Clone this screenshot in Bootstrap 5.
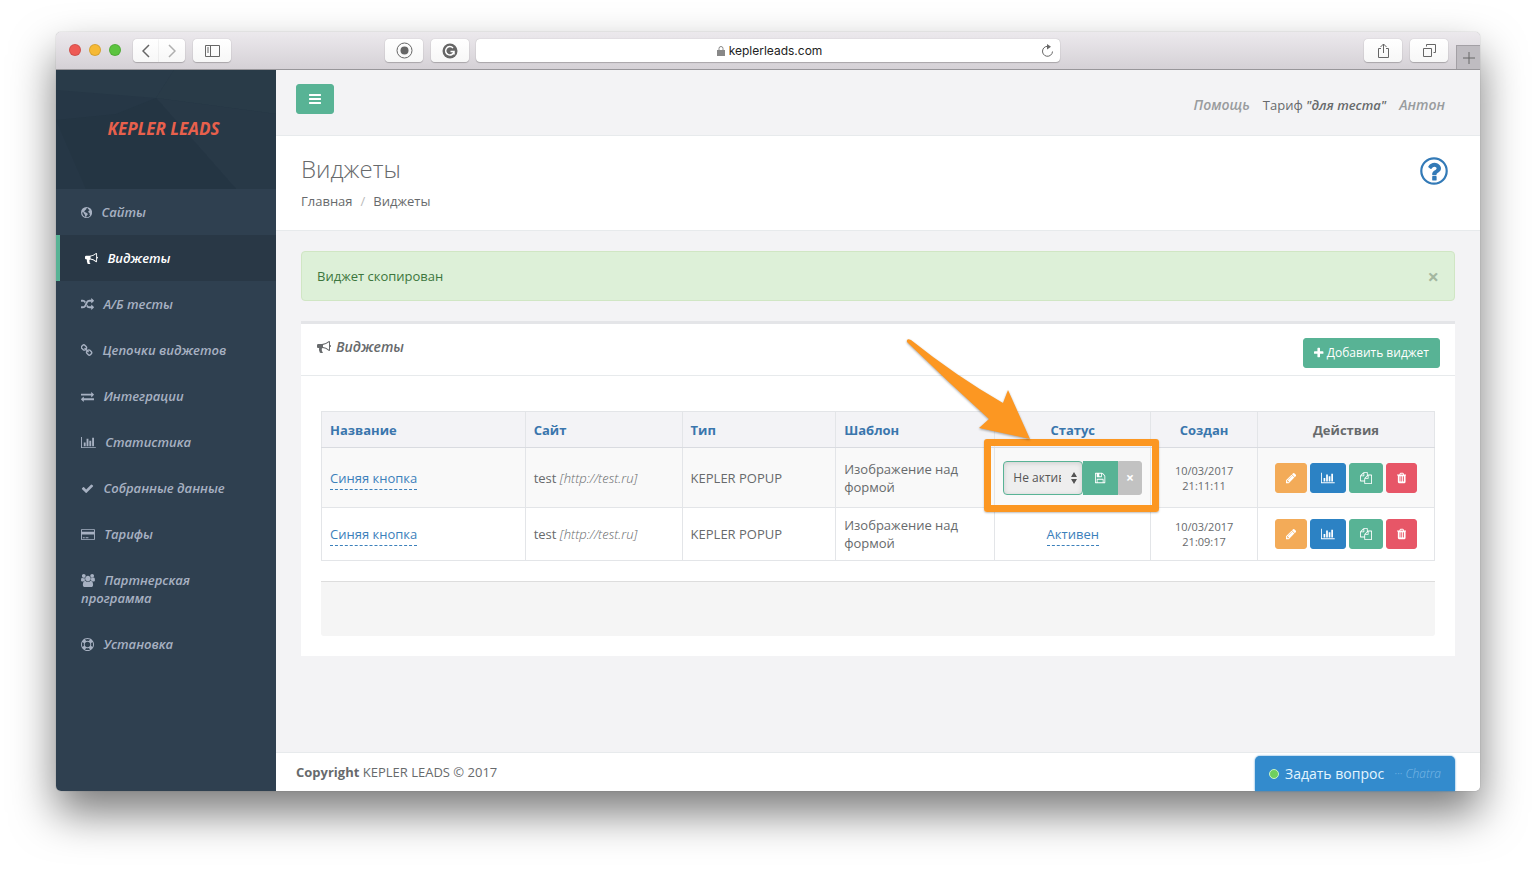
<!DOCTYPE html>
<html lang="ru">
<head>
<meta charset="utf-8">
<meta name="viewport" content="width=device-width, initial-scale=1">
<title>Виджеты</title>
<link rel="stylesheet" href="https://cdn.jsdelivr.net/npm/bootstrap@5.3.0/dist/css/bootstrap.min.css">
<style>
  :root { --green:#58b395; --blue:#2c82c4; --ink:#676a6c; --line:#e3e5e8; --link:#3a76ad; }
  body { font-family:"Open Sans","Noto Sans",sans-serif; font-size:13px; line-height:18px; color:var(--ink); background:#fff; padding:32px 56px 80px; }
  a { text-decoration:none; }
  .fa-ico { height:1em; width:auto; fill:currentColor; vertical-align:-2px; }
  .browser { min-height:calc(100vh - 112px); border-radius:5px; box-shadow:0 22px 44px rgba(0,0,0,.52), 0 0 1px rgba(0,0,0,.45); background:#f3f3f5; }

  /* window toolbar */
  .chrome { display:grid; grid-template-columns:1fr 41% 1fr; column-gap:7px; height:38px; background:linear-gradient(#ece9ed,#d5d1d6); border-bottom:1px solid #98969a; border-radius:5px 5px 0 0; }
  .lights { gap:8px; padding:0 12px 2px 13px; }
  .dot { width:12px; height:12px; border-radius:50%; border:1px solid rgba(0,0,0,.12); }
  .dot-close { background:#ee5a55; }
  .dot-min { background:#f6b935; }
  .dot-max { background:#5cc43f; }
  .tool { height:23px; width:38px; padding:0; border:0; border-radius:4px; background:linear-gradient(#fff,#f7f7f7); box-shadow:0 0 1px rgba(0,0,0,.3),0 1px 1px rgba(0,0,0,.2); display:flex; align-items:center; justify-content:center; color:#666; }
  .tool svg, .newtab svg, .address svg { fill:none; stroke:currentColor; }
  .tool-half { width:26px; }
  .address { height:23px; border-radius:4px; background:#fff; box-shadow:0 0 1px rgba(0,0,0,.3),0 1px 1px rgba(0,0,0,.2); font:12px/23px Inter,"Liberation Sans",sans-serif; color:#222; padding:0 6px 0 22px; }
  .newtab { width:24px; height:24px; padding:0; border:1px solid #a3a0a5; border-width:1px 0 0 1px; background:#bfbcc1; color:#666; display:flex; align-items:center; justify-content:center; }

  /* sidebar */
  .side { width:220px; flex:none; background:#2f4050; border-bottom-left-radius:5px; }
  .brand-box { height:119px; display:flex; align-items:center; justify-content:center; padding:0 5px 2px 0; color:#e8604c; font-size:17px; font-weight:700; font-style:italic;
    background:#263746 url("data:image/svg+xml,%3Csvg xmlns='http://www.w3.org/2000/svg' viewBox='0 0 220 119' preserveAspectRatio='none'%3E%3Cpath d='M0 0h118L100 28 0 20z' fill='%23293b49'/%3E%3Cpath d='M118 0h102v44l-120-16z' fill='%23293b48'/%3E%3Cpath d='M100 28l120 16v75h-40z' fill='%23283947'/%3E%3Cpath d='M0 50l60-6 40-16 80 91H30z' fill='%23243543'/%3E%3C/svg%3E") center/100% 100%; }
  .side a { display:block; padding:14px 20px 14px 25px; color:#a7b1c2; font-weight:600; font-style:italic; }
  .side a .fa-ico { margin-right:6px; }
  .side a.on { background:#293846; color:#fff; border-left:4px solid var(--green); }

  .btn-k { --bs-btn-color:#fff; --bs-btn-hover-color:#fff; --bs-btn-padding-y:5px; --bs-btn-padding-x:10px; --bs-btn-font-size:12px; --bs-btn-border-radius:3px; line-height:18px; color:#fff; }
  .c-green { background:var(--green); border-color:var(--green); }
  .c-blue { background:var(--blue); border-color:var(--blue); }
  .c-amber { background:#f3ab58; border-color:#f3ab58; }
  .c-red { background:#e75667; border-color:#e75667; }
  .menu-btn { width:38px; padding:5px 0; font-size:14px; }
  .topline { min-height:66px; border-bottom:1px solid #e7eaec; padding:14px 35px 0 20px; }
  .toplinks { gap:13px; font-weight:600; font-style:italic; padding-top:12px; }
  .toplinks a { color:#999c9e; font-size:14px; }
  .heading { background:#fff; border-bottom:1px solid #e7eaec; padding:19px 32px 19px 25px; min-height:95px; }
  .heading h1 { font-size:24px; line-height:28px; font-weight:300; margin:0 0 9px; }
  .crumbs { --bs-breadcrumb-divider:"/"; --bs-breadcrumb-item-padding-x:8px; --bs-breadcrumb-divider-color:#bbb; margin:0; }
  .crumbs a, .crumbs .active { color:var(--ink); }
  .help-link { color:#337ab7; padding-top:2px; height:30px; }
  .wrapper { padding:20px 25px 0; }
  .note { background:#ddf0d8; border:1px solid #d0e6c4; color:#3c763d; border-radius:4px; padding:15px; margin-bottom:20px; }
  .note .btn-x { border:0; background:none; padding:2px 0 0; color:#a3b7a0; font-weight:700; font-size:20px; line-height:16px; }
  .box { background:#fff; border-top:3px solid #e4e5e8; margin-bottom:76px; }
  .box-head { border-bottom:1px solid #e7eaec; padding:14px 15px 7px 16px; min-height:52px; }
  .box-head h2 { font-size:14px; line-height:18px; font-weight:600; font-style:italic; margin:0; }
  .box-head h2 .fa-ico { margin-right:5px; }
  .box-body { padding:35px 20px 20px; }

  .grid { --bs-table-bg:transparent; --bs-table-color:var(--ink); table-layout:fixed; color:var(--ink); border:1px solid var(--line); margin-bottom:20px; }
  .grid th, .grid td { padding:8px; border:1px solid var(--line); vertical-align:middle; }
  .grid thead th { background:#f3f3f6; border-bottom-color:#d9dbe0; font-weight:700; padding:9px 8px 8px; }
  .grid th a { color:var(--link); }
  .grid tbody tr:first-child td { background:#f9f9f9; height:60px; }
  .grid tbody tr:last-child td { height:53px; }
  .edit { color:#3b80bb; border-bottom:1px dashed #3b80bb; padding:0 0 2px; }
  .when { font-size:11px; line-height:15px; }
  .site { font-weight:300; }
  .acts { gap:3px; }
  .pick { width:80px; height:34px; padding:0 21px 0 9px; font-size:12px; color:#555; border:1px solid var(--green); border-radius:4px; appearance:none;
    background:#eee url("data:image/svg+xml,%3Csvg xmlns='http://www.w3.org/2000/svg' viewBox='0 0 6 12'%3E%3Cpath d='M0 5l3-5 3 5zM0 7h6l-3 5z' fill='%23555'/%3E%3C/svg%3E") no-repeat right 5px center/6px 12px; box-shadow:inset 0 1px 5px rgba(0,0,0,.14); }
  .btn-save { width:35px; border-radius:0; padding:0; font-size:12px; }
  .btn-drop { width:25px; border-radius:0 3px 3px 0; padding:0; background:#c2c2c2; border-color:#c2c2c2; font-size:14px; font-weight:700; }
  /* callout drawn over the status cell */
  .mark-frame { position:absolute; inset:-9px -9px -5px -11px; border:7px solid #fc9722; border-radius:3px; box-shadow:0 1px 2px rgba(0,0,0,.25); pointer-events:none; }
  .mark-arrow { position:absolute; left:-91px; top:-112px; width:130px; height:108px; filter:drop-shadow(0 1px 1px rgba(0,0,0,.35)); pointer-events:none; z-index:1; }
  .well-bar { height:55px; background:#f5f5f5; border-top:1px solid #ddd; border-radius:0 0 3px 3px; }
  .foot { background:#fff; border-top:1px solid #e7eaec; padding:10px 20px; border-bottom-right-radius:5px; }
  .chat { position:absolute; right:25px; bottom:0; width:200px; height:35px; border:0; border-radius:5px 5px 0 0; background:#338bcd; color:#e4f5ff; font-size:14px; box-shadow:0 0 2px #338bcd; padding:0 14px; }
  .chat i { font-size:12px; font-weight:300; color:#79b8e6; }
  .online { width:10px; height:10px; border-radius:50%; background:#6fcf5e; border:1px solid #c8f3c6; margin-right:6px; }
</style>
</head>
<body>
<svg width="0" height="0" class="position-absolute" aria-hidden="true"><defs>
  <path id="bars" d="M1664 1344v128q0 26-19 45t-45 19h-1408q-26 0-45-19t-19-45v-128q0-26 19-45t45-19h1408q26 0 45 19t19 45zm0-512v128q0 26-19 45t-45 19h-1408q-26 0-45-19t-19-45v-128q0-26 19-45t45-19h1408q26 0 45 19t19 45zm0-512v128q0 26-19 45t-45 19h-1408q-26 0-45-19t-19-45v-128q0-26 19-45t45-19h1408q26 0 45 19t19 45z"/>
  <path id="plus" d="M1600 736v192q0 40-28 68t-68 28h-416v416q0 40-28 68t-68 28h-192q-40 0-68-28t-28-68v-416h-416q-40 0-68-28t-28-68v-192q0-40 28-68t68-28h416v-416q0-40 28-68t68-28h192q40 0 68 28t28 68v416h416q40 0 68 28t28 68z"/>
  <path id="globe" fill-rule="evenodd" d="M896 128a768 768 0 1 1 0 1536a768 768 0 1 1 0-1536zM1000 240L860 330 880 430 740 560 640 640 560 760 700 860 820 900 960 1000 1060 1080 1040 1220 900 1350 840 1500 760 1540 700 1400 660 1200 540 1060 470 900 400 800 330 900 300 1000 420 1300 700 1520 960 1560 1200 1480 1400 1300 1300 1180 1340 1020 1240 920 1120 840 1160 680 1300 620 1240 500 1120 420z"/>
  <path id="bullhorn" d="M1664 640q53 0 90.5 37.5t37.5 90.5-37.5 90.5-90.5 37.5v384q0 52-38 90t-90 38q-417-347-812-380-58 19-91 66t-31 100.5 40 92.5q-20 33-23 65.5t6 58 33.5 55 48 50 61.5 50.5q-29 58-111.5 83t-168.5 11.5-132-55.5q-7-23-29.5-87.5t-32-94.5-23-89-15-101 3.5-98.5 22-110.5h-122q-66 0-113-47t-47-113v-192q0-66 47-113t113-47h480q435 0 896-384 52 0 90 38t38 90v384zm-128 604v-954q-394 302-768 343v270q377 42 768 341z"/>
  <path id="random" d="M666 481q-60 92-137 273-22-45-37-72.5t-40.5-63.5-51-56.5-63-35-81.5-14.5h-224q-14 0-23-9t-9-23v-192q0-14 9-23t23-9h224q250 0 410 225zm1126 799q0 14-9 23l-320 320q-9 9-23 9-13 0-22.5-9.5t-9.5-22.5v-192q-32 0-85 .5t-81 1-73-1-71-5-64-10.5-63-18.5-58-28.5-59-40-55-53.5-56-69.5q59-93 136-273 22 45 37 72.5t40.5 63.5 51 56.5 63 35 81.5 14.5h256v-192q0-14 9-23t23-9q12 0 24 10l319 319q9 9 9 23zm0-896q0 14-9 23l-320 320q-9 9-23 9-13 0-22.5-9.5t-9.5-22.5v-192h-256q-48 0-87 15t-69 45-51 61.5-45 77.5q-32 62-78 171-29 66-49.5 111t-54 105-64 100-74 83-90 68.5-106.5 42-128 16.5h-224q-14 0-23-9t-9-23v-192q0-14 9-23t23-9h224q48 0 87-15t69-45 51-61.5 45-77.5q32-62 78-171 29-66 49.5-111t54-105 64-100 74-83 90-68.5 106.5-42 128-16.5h256v-192q0-14 9-23t23-9q12 0 24 10l319 319q9 9 9 23z"/>
  <path id="chain" d="M1456 1216q0-40-28-68l-208-208q-28-28-68-28-42 0-72 32 3 3 19 18.5t21.5 21.5 15 19 13 25.5 3.5 27.5q0 40-28 68t-68 28q-15 0-27.5-3.5t-25.5-13-19-15-21.5-21.5-18.5-19q-33 31-33 73 0 40 28 68l206 207q27 27 68 27 40 0 68-26l147-146q28-28 28-67zm-703-705q0-40-28-68l-206-207q-28-28-68-28-39 0-68 27l-147 146q-28 28-28 67 0 40 28 68l208 208q27 27 68 27 42 0 72-31-3-3-19-18.5t-21.5-21.5-15-19-13-25.5-3.5-27.5q0-40 28-68t68-28q15 0 27.5 3.5t25.5 13 19 15 21.5 21.5 18.5 19q33-31 33-73zm895 705q0 120-85 203l-147 146q-83 83-203 83-121 0-204-85l-206-207q-83-83-83-203 0-123 88-209l-88-88q-86 88-208 88-120 0-204-84l-208-208q-84-84-84-204t85-203l147-146q83-83 203-83 121 0 204 85l206 207q83 83 83 203 0 123-88 209l88 88q86-88 208-88 120 0 204 84l208 208q84 84 84 204z"/>
  <path id="exchange" d="M1792 1184v192q0 13-9.500 22.500t-22.500 9.500h-1376v192q0 13-9.500 22.500t-22.500 9.500q-12 0-24-10l-319-320q-9-9-9-22 0-14 9-23l320-320q9-9 23-9 13 0 22.500 9.500t9.500 22.500v192h1376q13 0 22.500 9.500t9.500 22.500zm0-544q0 14-9 23l-320 320q-9 9-23 9-13 0-22.500-9.500t-9.500-22.500v-192h-1376q-13 0-22.500-9.500t-9.500-22.500v-192q0-13 9.500-22.500t22.500-9.500h1376v-192q0-14 9-23t23-9q12 0 24 10l319 319q9 9 9 23z"/>
  <path id="chart" d="M640 896v512h-256v-512h256zm384-512v1024h-256v-1024h256zm1024 1152v128h-2048v-1536h128v1408h1920zm-640-896v768h-256v-768h256zm384-384v1152h-256v-1152h256z"/>
  <path id="check" d="M1671 566q0 40-28 68l-724 724-136 136q-28 28-68 28t-68-28l-136-136-362-362q-28-28-28-68t28-68l136-136q28-28 68-28t68 28l294 295 656-657q28-28 68-28t68 28l136 136q28 28 28 68z"/>
  <path id="card-ico" d="M1760 128q66 0 113 47t47 113v1216q0 66-47 113t-113 47h-1600q-66 0-113-47t-47-113v-1216q0-66 47-113t113-47h1600zm-1600 128q-13 0-22.500 9.500t-9.500 22.500v224h1664v-224q0-13-9.500-22.500t-22.500-9.500h-1600zm1600 1280q13 0 22.500-9.500t9.500-22.500v-608h-1664v608q0 13 9.500 22.500t22.500 9.500h1600zm-1504-128v-128h256v128h-256zm384 0v-128h384v128h-384z"/>
  <path id="users" d="M593 896q-162 5-265 128h-134q-82 0-138-40.500t-56-118.500q0-353 124-353 6 0 43.500 21t97.500 42.500 119 21.500q67 0 133-23-5 37-5 66 0 159 81 294zm1071 637q0 120-73 189.500t-194 69.500h-874q-121 0-194-69.500t-73-189.500q0-53 3.500-103.500t14-109 26.500-108.500 43-97.500 62-81 85.500-53.500 111.500-20q10 0 43 21.500t73 48 107 48 135 21.500 135-21.500 107-48 73-48 43-21.500q61 0 111.500 20t85.500 53.500 62 81 43 97.500 26.500 108.500 14 109 3.500 103.500zm-1024-1277q0 106-75 181t-181 75-181-75-75-181 75-181 181-75 181 75 75 181zm704 384q0 159-112.500 271.500t-271.500 112.500-271.500-112.500-112.500-271.500 112.500-271.500 271.500-112.500 271.500 112.500 112.500 271.500zm576 225q0 78-56 118.500t-138 40.500h-134q-103-123-265-128 81-135 81-294 0-29-5-66 66 23 133 23 59 0 119-21.500t97.500-42.500 43.500-21q124 0 124 353zm-128-609q0 106-75 181t-181 75-181-75-75-181 75-181 181-75 181 75 75 181z"/>
  <path id="ring" d="M896 0q182 0 348 71t286 191 191 286 71 348-71 348-191 286-286 191-348 71-348-71-286-191-191-286-71-348 71-348 191-286 286-191 348-71zm0 128q-190 0-361 90l194 194q82-28 167-28t167 28l194-194q-171-90-361-90zm-678 1129l194-194q-28-82-28-167t28-167l-194-194q-90 171-90 361t90 361zm678 407q190 0 361-90l-194-194q-82 28-167 28t-167-28l-194 194q171 90 361 90zm0-384q159 0 271.500-112.500t112.500-271.500-112.500-271.500-271.500-112.500-271.500 112.500-112.500 271.500 112.500 271.500 271.500 112.500zm484-217l194 194q90-171 90-361t-90-361l-194 194q28 82 28 167t-28 167z"/>
  <path id="pencil" d="M491 1536l91-91-235-235-91 91v107h128v128h107zm523-928q0-22-22-22-10 0-17 7l-542 542q-7 7-7 17 0 22 22 22 10 0 17-7l542-542q7-7 7-17zm-54-192l416 416-832 832h-416v-416zm683 96q0 53-37 90l-166 166-416-416 166-165q36-38 90-38 53 0 91 38l235 234q37 39 37 91z"/>
  <path id="files" d="M1696 384q40 0 68 28t28 68v1216q0 40-28 68t-68 28h-960q-40 0-68-28t-28-68v-288h-544q-40 0-68-28t-28-68v-672q0-40 20-88t48-76l408-408q28-28 76-48t88-20h416q40 0 68 28t28 68v328q68-40 128-40h416zm-544 213l-299 299h299v-299zm-640-384l-299 299h299v-299zm196 647l316-316v-416h-384v416q0 40-28 68t-68 28h-416v640h512v-256q0-40 20-88t48-76zm956 804v-1152h-384v416q0 40-28 68t-68 28h-416v640h896z"/>
  <path id="trash" d="M704 1376v-704q0-14-9-23t-23-9h-64q-14 0-23 9t-9 23v704q0 14 9 23t23 9h64q14 0 23-9t9-23zm256 0v-704q0-14-9-23t-23-9h-64q-14 0-23 9t-9 23v704q0 14 9 23t23 9h64q14 0 23-9t9-23zm256 0v-704q0-14-9-23t-23-9h-64q-14 0-23 9t-9 23v704q0 14 9 23t23 9h64q14 0 23-9t9-23zm-544-992h448l-48-117q-7-9-17-11h-317q-10 2-17 11zm928 32v64q0 14-9 23t-23 9h-96v948q0 83-47 143.500t-113 60.500h-832q-66 0-113-58.500t-47-141.500v-952h-96q-14 0-23-9t-9-23v-64q0-14 9-23t23-9h309l70-167q15-37 54-63t79-26h320q40 0 79 26t54 63l70 167h309q14 0 23 9t9 23z"/>
  <path id="floppy" d="M512 1536h768v-384h-768v384zm896 0h128v-896q0-14-10-38.500t-20-34.500l-281-281q-10-10-34-20t-39-10v416q0 40-28 68t-68 28h-576q-40 0-68-28t-28-68v-416h-128v1280h128v-416q0-40 28-68t68-28h832q40 0 68 28t28 68v416zm-384-928v-320q0-13-9.500-22.500t-22.500-9.500h-192q-13 0-22.500 9.500t-9.500 22.500v320q0 13 9.500 22.500t22.500 9.500h192q13 0 22.500-9.500t9.500-22.500zm640 32v928q0 40-28 68t-68 28h-1344q-40 0-68-28t-28-68v-1344q0-40 28-68t68-28h928q40 0 88 20t76 48l280 280q28 28 48 76t20 88z"/>
  <path id="question" d="M1088 1256v240q0 16-12 28t-28 12h-240q-16 0-28-12t-12-28v-240q0-16 12-28t28-12h240q16 0 28 12t12 28zm316-600q0 54-15.500 101t-35 76.500-55 59.500-57.500 43.500-61 35.500q-41 23-68.500 65t-27.500 67q0 17-12 32.500t-28 15.500h-240q-15 0-25.500-18.500t-10.500-37.500v-45q0-83 65-156.500t143-108.500q59-27 84-56t25-76q0-42-46.500-74t-107.500-32q-65 0-108 29-35 25-107 115-13 16-31 16-12 0-25-8l-164-125q-13-10-15.500-25t5.500-28q160-266 464-266 80 0 161 31t146 83 106 127.500 41 158.500z"/>
</defs></svg>

<div class="browser d-flex flex-column position-relative">
  <div class="chrome">
    <div class="d-flex align-items-center">
      <span class="lights d-flex"><span class="dot dot-close"></span><span class="dot dot-min"></span><span class="dot dot-max"></span></span>
      <button class="tool tool-half rounded-end-0" type="button" aria-label="Назад"><svg width="8" height="14" stroke-width="1.5"><path d="M7 1L1 7l6 6"/></svg></button>
      <button class="tool tool-half rounded-start-0 me-2" type="button" aria-label="Вперёд"><svg width="8" height="14" stroke-width="1.5" class="opacity-50"><path d="M1 1l6 6-6 6"/></svg></button>
      <button class="tool" type="button" aria-label="Боковая панель"><svg width="15" height="12"><path d="M.5.5h14v11H.5zM5.500 .5v11M2 3h2M2 5h2M2 7h2"/></svg></button>
      <button class="tool ms-auto me-2" type="button" aria-label="Запись"><svg width="17" height="17"><circle cx="8.500" cy="8.500" r="7.500"/><circle cx="8.500" cy="8.500" r="4" fill="currentColor" stroke="none"/></svg></button>
      <button class="tool" type="button" aria-label="Грамматика"><svg width="16" height="16"><circle cx="8" cy="8" r="7.500" fill="currentColor" stroke="none"/><path d="M11 5a4.200 4.200 0 1 0 1 3.500H8.500M12 8.500v3" stroke="#fff" stroke-width="1.500"/></svg></button>
    </div>
    <div class="address align-self-center d-flex align-items-center">
      <span class="mx-auto d-flex align-items-center gap-1"><svg width="8" height="10"><path d="M2 4.500v-2a2 2 0 0 1 4 0v2" stroke="#888"/><path d="M0 4h8v6H0z" fill="#888" stroke="none"/></svg>keplerleads.com</span>
      <svg width="13" height="14" color="#666"><path d="M8.500 2.700A5 5 0 1 0 11.500 7.500"/><path d="M6 0l4 2.800L6 5.500z" fill="currentColor" stroke="none"/></svg>
    </div>
    <div class="d-flex align-items-center justify-content-end gap-2">
      <button class="tool" type="button" aria-label="Поделиться"><svg width="13" height="16"><path d="M4 5.500H1.500v9h10v-9H9M6.500 10V1M3.500 4l3-3 3 3"/></svg></button>
      <button class="tool" type="button" aria-label="Вкладки"><svg width="13" height="13"><path d="M.5 4.500h8v8h-8zM3.500 2.500v-2h9v8h-2"/></svg></button>
      <button class="newtab align-self-end" type="button" aria-label="Новая вкладка"><svg width="12" height="12"><path d="M6 0v12M0 6h12" stroke-width="1"/></svg></button>
    </div>
  </div>

  <div class="d-flex flex-grow-1">
    <nav class="side">
      <div class="brand-box">KEPLER LEADS</div>
      <a href="#"><svg class="fa-ico" viewBox="128 0 1536 1792"><use href="#globe"/></svg> Сайты</a>
      <a href="#" class="on"><svg class="fa-ico" viewBox="0 0 1792 1792"><use href="#bullhorn"/></svg> Виджеты</a>
      <a href="#"><svg class="fa-ico" viewBox="0 0 1792 1792"><use href="#random"/></svg> А/Б тесты</a>
      <a href="#"><svg class="fa-ico" viewBox="64 0 1664 1792"><use href="#chain"/></svg> Цепочки виджетов</a>
      <a href="#"><svg class="fa-ico" viewBox="0 0 1792 1792"><use href="#exchange"/></svg> Интеграции</a>
      <a href="#"><svg class="fa-ico" viewBox="0 0 2048 1792"><use href="#chart"/></svg> Статистика</a>
      <a href="#"><svg class="fa-ico" viewBox="0 0 1792 1792"><use href="#check"/></svg> Собранные данные</a>
      <a href="#"><svg class="fa-ico" viewBox="0 0 1920 1792"><use href="#card-ico"/></svg> Тарифы</a>
      <a href="#"><svg class="fa-ico" viewBox="0 0 1920 1792"><use href="#users"/></svg> Партнерская программа</a>
      <a href="#"><svg class="fa-ico" viewBox="0 0 1792 1792"><use href="#ring"/></svg> Установка</a>
    </nav>

    <main class="flex-grow-1 d-flex flex-column">
      <div class="topline d-flex justify-content-between align-items-start">
        <button class="btn btn-k c-green menu-btn" type="button" aria-label="Меню"><svg class="fa-ico" viewBox="0 0 1792 1792"><use href="#bars"/></svg></button>
        <div class="toplinks d-flex">
          <a href="#">Помощь</a>
          <span><span class="fw-normal fst-normal">Тариф</span> "для теста"</span>
          <a href="#">Антон</a>
        </div>
      </div>
      <div class="heading d-flex justify-content-between">
        <div>
          <h1>Виджеты</h1>
          <ol class="breadcrumb crumbs">
            <li class="breadcrumb-item"><a href="#">Главная</a></li>
            <li class="breadcrumb-item active">Виджеты</li>
          </ol>
        </div>
        <a class="help-link" href="#" aria-label="Справка"><svg width="28" height="28" viewBox="0 0 28 28" fill="currentColor"><circle cx="14" cy="14" r="12.700" fill="none" stroke="currentColor" stroke-width="2.200"/><use href="#question" transform="translate(1.600 2.300) scale(.0138)"/></svg></a>
      </div>

      <div class="wrapper">
        <div class="note d-flex justify-content-between align-items-center" role="alert"><span>Виджет скопирован</span><button class="btn-x" type="button" aria-label="Закрыть">×</button></div>

        <section class="box">
          <div class="box-head d-flex justify-content-between align-items-start">
            <h2><svg class="fa-ico" viewBox="0 0 1792 1792"><use href="#bullhorn"/></svg>Виджеты</h2>
            <button class="btn btn-k c-green" type="button"><svg class="fa-ico" viewBox="192 0 1408 1792"><use href="#plus"/></svg> Добавить виджет</button>
          </div>
          <div class="box-body">
            <table class="table grid">
              <colgroup><col style="width:18.3%"><col style="width:14.1%"><col style="width:13.8%"><col style="width:14.3%"><col style="width:14%"><col style="width:9.6%"><col style="width:15.9%"></colgroup>
              <thead>
                <tr><th><a href="#">Название</a></th><th><a href="#">Сайт</a></th><th><a href="#">Тип</a></th><th><a href="#">Шаблон</a></th><th class="text-center"><a href="#">Статус</a></th><th class="text-center"><a href="#">Создан</a></th><th class="text-center">Действия</th></tr>
              </thead>
              <tbody>
                <tr>
                  <td><a class="edit" href="#">Синяя кнопка</a></td>
                  <td>test <i class="site">[http://test.ru]</i></td>
                  <td>KEPLER POPUP</td>
                  <td>Изображение над формой</td>
                  <td class="position-relative">
                    <div class="d-flex">
                      <select class="pick" aria-label="Статус"><option>Не активен</option><option>Активен</option></select>
                      <button class="btn btn-k c-green btn-save" type="button" aria-label="Сохранить"><svg class="fa-ico" viewBox="128 0 1536 1792"><use href="#floppy"/></svg></button>
                      <button class="btn btn-k btn-drop" type="button" aria-label="Отменить">×</button>
                    </div>
                    <span class="mark-frame"></span>
                    <svg class="mark-arrow" viewBox="0 0 130 108"><path d="M3 6Q2 2 7 4Q52 40 99 67L104 54L126 103L75 92L85 83Q44 46 3 6z" fill="#fc9722"/></svg>
                  </td>
                  <td class="text-center when">10/03/2017 21:11:11</td>
                  <td><div class="acts d-flex justify-content-center">
                    <button class="btn btn-k c-amber" type="button" aria-label="Изменить"><svg class="fa-ico" viewBox="128 0 1536 1792"><use href="#pencil"/></svg></button>
                    <button class="btn btn-k c-blue" type="button" aria-label="Статистика"><svg class="fa-ico" viewBox="0 0 2048 1792"><use href="#chart"/></svg></button>
                    <button class="btn btn-k c-green" type="button" aria-label="Копировать"><svg class="fa-ico" viewBox="0 0 1792 1792"><use href="#files"/></svg></button>
                    <button class="btn btn-k c-red" type="button" aria-label="Удалить"><svg class="fa-ico" viewBox="192 0 1408 1792"><use href="#trash"/></svg></button>
                  </div></td>
                </tr>
                <tr>
                  <td><a class="edit" href="#">Синяя кнопка</a></td>
                  <td>test <i class="site">[http://test.ru]</i></td>
                  <td>KEPLER POPUP</td>
                  <td>Изображение над формой</td>
                  <td class="text-center"><a class="edit" href="#">Активен</a></td>
                  <td class="text-center when">10/03/2017 21:09:17</td>
                  <td><div class="acts d-flex justify-content-center">
                    <button class="btn btn-k c-amber" type="button" aria-label="Изменить"><svg class="fa-ico" viewBox="128 0 1536 1792"><use href="#pencil"/></svg></button>
                    <button class="btn btn-k c-blue" type="button" aria-label="Статистика"><svg class="fa-ico" viewBox="0 0 2048 1792"><use href="#chart"/></svg></button>
                    <button class="btn btn-k c-green" type="button" aria-label="Копировать"><svg class="fa-ico" viewBox="0 0 1792 1792"><use href="#files"/></svg></button>
                    <button class="btn btn-k c-red" type="button" aria-label="Удалить"><svg class="fa-ico" viewBox="192 0 1408 1792"><use href="#trash"/></svg></button>
                  </div></td>
                </tr>
              </tbody>
            </table>
            <div class="well-bar"></div>
          </div>
        </section>
      </div>

      <footer class="foot mt-auto"><b>Copyright</b> KEPLER LEADS © 2017</footer>
    </main>
  </div>
  <button class="chat d-flex align-items-center" type="button"><span class="online"></span>Задать вопрос <i class="ms-auto">··· Chatra</i></button>
</div>
<script src="https://cdn.jsdelivr.net/npm/bootstrap@5.3.0/dist/js/bootstrap.bundle.min.js"></script>
</body>
</html>
